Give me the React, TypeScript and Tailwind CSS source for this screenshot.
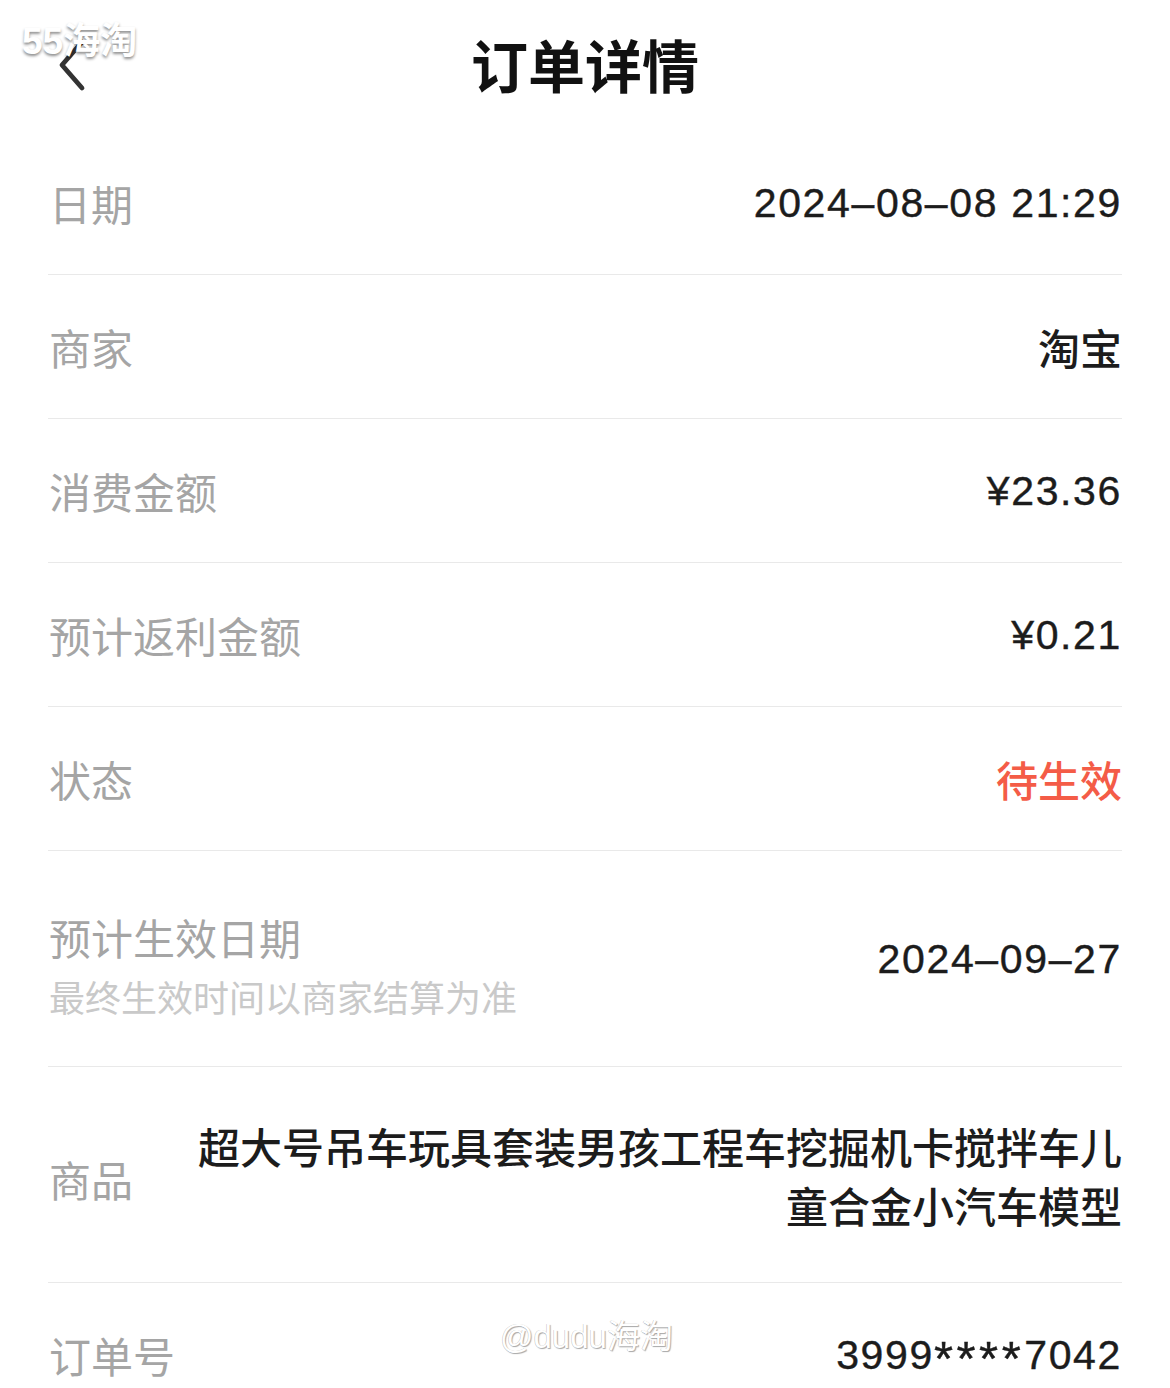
import React from "react";

const CJK = '"Noto Sans CJK SC", "Liberation Sans", sans-serif';

function Row({
  label,
  children,
  h = "h-[144px]",
  border = true,
}: {
  label: React.ReactNode;
  children: React.ReactNode;
  h?: string;
  border?: boolean;
}) {
  return (
    <div
      className={`flex items-center justify-between ${h} ${
        border ? "border-b border-[#e9e9e9]" : ""
      }`}
    >
      {label}
      {children}
    </div>
  );
}

function Label({ text }: { text: string }) {
  return (
    <div className="pl-[1px] text-[42px] leading-[56px] text-[#a5a5a5] font-[family-name:'Noto_Sans_CJK_SC',sans-serif]">
      {text}
    </div>
  );
}

function NumValue({ children }: { children: React.ReactNode }) {
  return (
    <div className="text-[41px] leading-[56px] tracking-[0.04em] text-[#1c1c1c] [-webkit-text-stroke:0.4px_#1c1c1c] font-[family-name:'Liberation_Sans','Noto_Sans_CJK_SC',sans-serif]">
      {children}
    </div>
  );
}

export default function App() {
  return (
    <div
      className="relative h-[1388px] w-[1170px] overflow-hidden bg-white"
      style={{ fontFamily: CJK }}
    >
      {/* Header */}
      <div className="relative flex h-[131px] items-center justify-center pb-[4px]">
        <svg
          className="absolute left-[56px] top-[38px]"
          width="34"
          height="56"
          viewBox="0 0 34 56"
          fill="none"
        >
          <polyline
            points="26,4 6,27 26,50"
            stroke="#333333"
            strokeWidth="4.8"
            strokeLinecap="round"
            strokeLinejoin="round"
          />
        </svg>
        <div className="text-[57px] font-bold leading-none text-[#111111] font-[family-name:'Noto_Sans_CJK_SC',sans-serif]">
          订单详情
        </div>
        <div className="absolute left-[22px] top-[21px] text-[37px] font-bold leading-[42px] tracking-[0px] text-white [text-shadow:0_2px_3px_rgba(0,0,0,0.45)] font-[family-name:'Liberation_Sans','Noto_Sans_CJK_SC',sans-serif]">
          55海淘
        </div>
      </div>

      {/* Rows */}
      <div className="mx-[48px] flex flex-col">
        <Row label={<Label text="日期" />}>
          <NumValue>2024–08–08 21:29</NumValue>
        </Row>
        <Row label={<Label text="商家" />}>
          <div className="text-[42px] font-medium leading-[56px] text-[#1c1c1c]">淘宝</div>
        </Row>
        <Row label={<Label text="消费金额" />}>
          <NumValue>¥23.36</NumValue>
        </Row>
        <Row label={<Label text="预计返利金额" />}>
          <NumValue>¥0.21</NumValue>
        </Row>
        <Row label={<Label text="状态" />}>
          <div className="text-[42px] font-medium leading-[56px] text-[#f45c47]">待生效</div>
        </Row>
        <Row
          h="h-[216px]"
          label={
            <div className="mt-[14px] flex flex-col pl-[1px]">
              <div className="text-[42px] leading-[60px] text-[#a5a5a5]">预计生效日期</div>
              <div className="text-[36px] leading-[58px] text-[#c9c9c9]">
                最终生效时间以商家结算为准
              </div>
            </div>
          }
        >
          <NumValue>2024–09–27</NumValue>
        </Row>
        <Row
          h="h-[216px]"
          label={
            <div className="mt-[8px]">
              <Label text="商品" />
            </div>
          }
        >
          <div className="flex flex-col items-end text-[42px] font-medium leading-[59px] text-[#1c1c1c]">
            <div className="whitespace-nowrap">超大号吊车玩具套装男孩工程车挖掘机卡搅拌车儿</div>
            <div className="whitespace-nowrap">童合金小汽车模型</div>
          </div>
        </Row>
        <Row label={<Label text="订单号" />} border={false}>
          <NumValue>
            3999<span className="align-[-6px] text-[49px] leading-none tracking-[3.5px]">****</span>7042
          </NumValue>
        </Row>
      </div>

      {/* Watermark */}
      <div className="absolute left-[500px] top-[1316px] text-[33px] leading-[42px] text-white [text-shadow:1px_1px_1px_rgba(0,0,0,0.35),-0.5px_-0.5px_0.5px_rgba(0,0,0,0.25)] font-[family-name:'Liberation_Sans','Noto_Sans_CJK_SC',sans-serif]">
        @dudu海淘
      </div>
    </div>
  );
}
